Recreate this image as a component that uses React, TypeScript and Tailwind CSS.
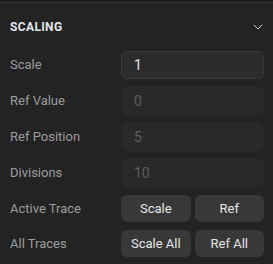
import { ChevronDown } from "lucide-react";

const fields = [
  { label: "Scale", value: "1", enabled: true },
  { label: "Ref Value", value: "0", enabled: false },
  { label: "Ref Position", value: "5", enabled: false },
  { label: "Divisions", value: "10", enabled: false },
];

const actions = [
  { label: "Active Trace", buttons: ["Scale", "Ref"] },
  { label: "All Traces", buttons: ["Scale All", "Ref All"] },
];

export default function App() {
  return (
    <div
      className="h-[264px] w-[273px] bg-[#1d1d1d] pt-[2px] text-[13px]"
      style={{ fontFamily: "Roboto, 'Liberation Sans', sans-serif" }}
    >
      <section className="h-full border-t border-[#353535] bg-[#232323]">
        <header className="flex h-[48px] items-center justify-between pl-[10px] pr-[7px]">
          <h2 className="text-[12px] font-bold tracking-[0.03em] text-[#e4e6ea]">SCALING</h2>
          <ChevronDown size={16} strokeWidth={1.5} className="text-[#d0d0d0]" />
        </header>
        <div className="grid grid-cols-[111px_1fr] gap-y-[8px] pl-[10px] pr-[9px]">
          {fields.map((f) => (
            <div key={f.label} className="contents">
              <label className="flex items-center text-[#9c9c9c]">{f.label}</label>
              <input
                readOnly
                value={f.value}
                disabled={!f.enabled}
                className={`h-[28px] w-full rounded-[6px] border px-[12px] text-[14px] outline-none ${
                  f.enabled
                    ? "border-[#3a3a3a] bg-[#2c2c2c] text-[#e6e6e6]"
                    : "border-[#2a2a2a] bg-[#292929] text-[#5e5e5e]"
                }`}
              />
            </div>
          ))}
          {actions.map((a) => (
            <div key={a.label} className="contents">
              <span className="flex items-center text-[#9c9c9c]">{a.label}</span>
              <div className="grid grid-cols-2 gap-[4px]">
                {a.buttons.map((b) => (
                  <button
                    key={b}
                    className="h-[27px] rounded-[6px] bg-[#383838] text-[#e6e6e6]"
                  >
                    {b}
                  </button>
                ))}
              </div>
            </div>
          ))}
        </div>
      </section>
    </div>
  );
}
